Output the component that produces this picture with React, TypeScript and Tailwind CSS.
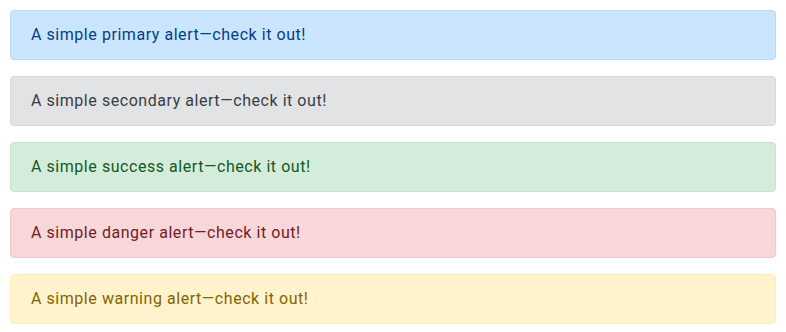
const alerts = [
  { name: 'primary', cls: 'bg-[#cce5ff] border-[#b8daff] text-[#004085]' },
  { name: 'secondary', cls: 'bg-[#e2e3e5] border-[#d6d8db] text-[#383d41]' },
  { name: 'success', cls: 'bg-[#d4edda] border-[#c3e6cb] text-[#155724]' },
  { name: 'danger', cls: 'bg-[#f8d7da] border-[#f5c6cb] text-[#721c24]' },
  { name: 'warning', cls: 'bg-[#fff3cd] border-[#ffeeba] text-[#856404]' },
];

export default function App() {
  return (
    <div className="min-h-[332px] bg-white p-[10px] font-['Roboto',sans-serif] text-base tracking-[0.55px]">
      <div className="flex flex-col gap-4">
        {alerts.map((a) => (
          <div key={a.name} role="alert" className={`border rounded px-5 py-3 leading-6 ${a.cls}`}>
            A simple {a.name} alert—check it out!
          </div>
        ))}
      </div>
    </div>
  );
}
